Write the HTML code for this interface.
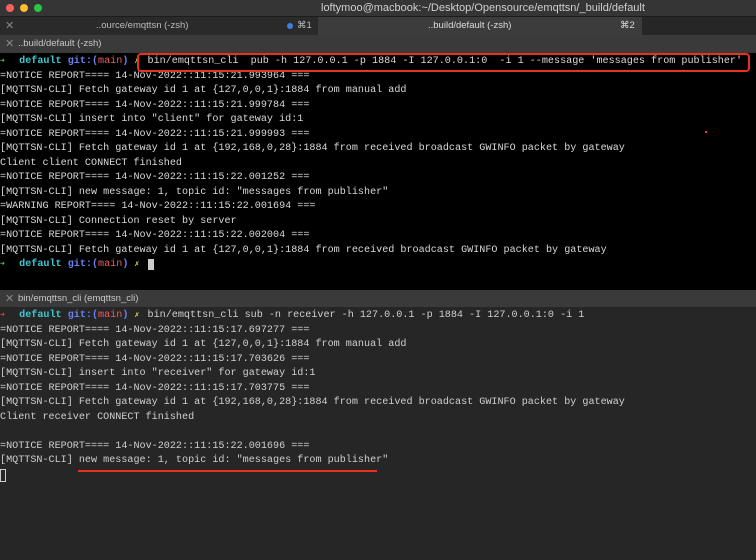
<!DOCTYPE html>
<html><head><meta charset="utf-8"><style>
*{margin:0;padding:0;box-sizing:border-box}
body{width:756px;height:560px;overflow:hidden;background:#262626;font-family:"Liberation Sans",sans-serif;position:relative}
.title{position:absolute;left:0;top:0;width:756px;height:16px;background:#353535;color:#d0d0d0;font-size:11px;line-height:16px}
.dot{position:absolute;top:4px;width:8px;height:8px;border-radius:50%}
.tabs{position:absolute;left:0;top:16px;width:756px;height:19px;background:#262626;border-top:1px solid #1c1c1c}
.tab{position:absolute;top:0;height:18px;font-size:9.5px;color:#bbb;line-height:18px}
.ph{position:absolute;left:0;width:756px;height:18px;background:#3a3a3a;color:#c8c8c8;font-size:9.5px;line-height:18px}
.x{position:absolute;left:5px;color:#888;font-size:11px}
.term{position:absolute;left:0;width:756px;font-family:"Liberation Mono",monospace;font-size:10.12px;line-height:14.5px;color:#d8d8d8;white-space:pre;padding-top:2px}
.g{color:#3fd36b}.c{color:#3ec9d3;font-weight:bold}.b{color:#6b7ff0;font-weight:bold}.r{color:#ef5b5b}.y{color:#e2d35a}.rr{color:#e84a4a}
.k{display:inline-block;width:7px;overflow:visible;font-size:8px}
</style></head><body>
<div class="title">
<div class="dot" style="left:6px;background:#fe5f57"></div>
<div class="dot" style="left:20px;background:#febc2e"></div>
<div class="dot" style="left:34px;background:#28c840"></div>
<div style="position:absolute;left:321px;top:0">loftymoo@macbook:~/Desktop/Opensource/emqttsn/_build/default</div>
</div>
<div class="tabs">
<div class="tab" style="left:0;width:318px;background:#2a2a2a"><span class="x">✕</span><span style="position:absolute;left:96px">..ource/emqttsn (-zsh)</span><span style="position:absolute;left:287px;top:6px;width:6px;height:6px;border-radius:50%;background:#3f7fe0"></span><span style="position:absolute;left:297px">⌘1</span></div>
<div class="tab" style="left:318px;width:324px;background:#3c3c3c;color:#ddd"><span style="position:absolute;left:110px">..build/default (-zsh)</span><span style="position:absolute;left:302px">⌘2</span></div>
</div>
<div class="ph" style="top:35px"><span class="x">✕</span><span style="position:absolute;left:18px">..build/default (-zsh)</span></div>
<div class="term" style="top:53px;height:237px;background:#000"><span class="g k">➜</span>  <span class="c">default</span> <span class="b">git:(</span><span class="r">main</span><span class="b">)</span> <span class="y k">✗</span> bin/emqttsn_cli  pub -h 127.0.0.1 -p 1884 -I 127.0.0.1:0  -i 1 --message 'messages from publisher'
=NOTICE REPORT==== 14-Nov-2022::11:15:21.993964 ===
[MQTTSN-CLI] Fetch gateway id 1 at {127,0,0,1}:1884 from manual add
=NOTICE REPORT==== 14-Nov-2022::11:15:21.999784 ===
[MQTTSN-CLI] insert into "client" for gateway id:1
=NOTICE REPORT==== 14-Nov-2022::11:15:21.999993 ===
[MQTTSN-CLI] Fetch gateway id 1 at {192,168,0,28}:1884 from received broadcast GWINFO packet by gateway
Client client CONNECT finished
=NOTICE REPORT==== 14-Nov-2022::11:15:22.001252 ===
[MQTTSN-CLI] new message: 1, topic id: "messages from publisher"
=WARNING REPORT==== 14-Nov-2022::11:15:22.001694 ===
[MQTTSN-CLI] Connection reset by server
=NOTICE REPORT==== 14-Nov-2022::11:15:22.002004 ===
[MQTTSN-CLI] Fetch gateway id 1 at {127,0,0,1}:1884 from received broadcast GWINFO packet by gateway
<span class="g k">➜</span>  <span class="c">default</span> <span class="b">git:(</span><span class="r">main</span><span class="b">)</span> <span class="y k">✗</span> <span style="background:#ccc"> </span></div>
<div style="position:absolute;left:137px;top:53px;width:613px;height:19px;border:2px solid #e8321e;border-radius:4px"></div>
<div style="position:absolute;left:705px;top:131px;width:2px;height:2px;background:#e33"></div>
<div class="ph" style="top:290px"><span class="x">✕</span><span style="position:absolute;left:18px">bin/emqttsn_cli (emqttsn_cli)</span></div>
<div class="term" style="top:307px;height:253px;background:#262626;color:#cfcfcf"><span class="rr k">➜</span>  <span class="c">default</span> <span class="b">git:(</span><span class="r">main</span><span class="b">)</span> <span class="y k">✗</span> bin/emqttsn_cli sub -n receiver -h 127.0.0.1 -p 1884 -I 127.0.0.1:0 -i 1
=NOTICE REPORT==== 14-Nov-2022::11:15:17.697277 ===
[MQTTSN-CLI] Fetch gateway id 1 at {127,0,0,1}:1884 from manual add
=NOTICE REPORT==== 14-Nov-2022::11:15:17.703626 ===
[MQTTSN-CLI] insert into "receiver" for gateway id:1
=NOTICE REPORT==== 14-Nov-2022::11:15:17.703775 ===
[MQTTSN-CLI] Fetch gateway id 1 at {192,168,0,28}:1884 from received broadcast GWINFO packet by gateway
Client receiver CONNECT finished

=NOTICE REPORT==== 14-Nov-2022::11:15:22.001696 ===
[MQTTSN-CLI] new message: 1, topic id: "messages from publisher"
<span style="display:inline-block;width:6px;height:13px;border:1px solid #ccc;vertical-align:middle"></span></div>
<div style="position:absolute;left:78px;top:470px;width:299px;height:2px;background:#e8321e"></div>
</body></html>
